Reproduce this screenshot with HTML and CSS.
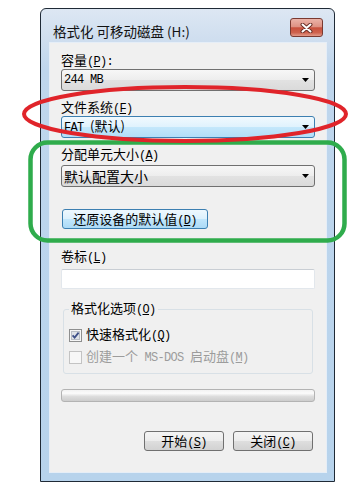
FILE: index.html
```html
<!DOCTYPE html>
<html lang="zh-CN">
<head>
<meta charset="utf-8">
<title>格式化 可移动磁盘 (H:)</title>
<link rel="stylesheet" href="styles.css">
</head>
<body>
<div class="window">
  <div class="titlebar">
    <span class="title">格式化 可移动磁盘 (H:)</span>
    <div class="close">
      <svg width="13" height="10" viewBox="0 0 13 10"><path d="M2.5 1.5L10.5 8.5M10.5 1.5L2.5 8.5" stroke="#6a2e26" stroke-width="4" stroke-linecap="round"/><path d="M2.5 1.5L10.5 8.5M10.5 1.5L2.5 8.5" stroke="#ffffff" stroke-width="2" stroke-linecap="round"/></svg>
    </div>
  </div>
  <div class="panel">
    <div class="field-label">容量<span class="mn">(<u>P</u>):</span></div>
    <div class="combo combo-first"><span class="mn value">244 MB</span><svg class="arrow" width="7" height="4" viewBox="0 0 7 4"><path d="M0 0H7L3.5 4Z" fill="#000"/></svg></div>

    <div class="field-label spaced">文件系统<span class="mn">(<u>F</u>)</span></div>
    <div class="combo combo-hot"><span class="value"><span class="mn">FAT </span>(默认)</span><svg class="arrow" width="7" height="4" viewBox="0 0 7 4"><path d="M0 0H7L3.5 4Z" fill="#000"/></svg></div>

    <div class="field-label spaced">分配单元大小<span class="mn">(<u>A</u>)</span></div>
    <div class="combo combo-alloc"><span class="value big">默认配置大小</span><svg class="arrow" width="7" height="4" viewBox="0 0 7 4"><path d="M0 0H7L3.5 4Z" fill="#000"/></svg></div>

    <button class="reset" type="button">还原设备的默认值<span class="mn">(<u>D</u>)</span></button>

    <div class="field-label label-volume">卷标<span class="mn">(<u>L</u>)</span></div>
    <div class="textbox"></div>

    <fieldset class="options">
      <legend>格式化选项<span class="mn">(<u>O</u>)</span></legend>
      <div class="check check-first">
        <svg class="box" width="13" height="13" viewBox="0 0 13 13"><rect x="0.5" y="0.5" width="12" height="12" fill="#f6f6f6" stroke="#8e8f8f"/><rect x="2.5" y="2.5" width="8" height="8" fill="#dfe3e8" stroke="#b9bec5"/><path d="M3.6 6.4L5.6 8.6L9.6 3.6" fill="none" stroke="#3e5088" stroke-width="1.8"/></svg>
        <span>快速格式化<span class="mn">(<u>Q</u>)</span></span>
      </div>
      <div class="check disabled">
        <svg class="box" width="13" height="13" viewBox="0 0 13 13"><rect x="0.5" y="0.5" width="12" height="12" fill="#f7f7f7" stroke="#c3c3c3"/></svg>
        <span>创建一个<span class="mn"> MS-DOS </span>启动盘<span class="mn">(<u>M</u>)</span></span>
      </div>
    </fieldset>

    <div class="progress"></div>

    <div class="actions">
      <button class="btn" type="button">开始<span class="mn">(<u>S</u>)</span></button>
      <button class="btn" type="button">关闭<span class="mn">(<u>C</u>)</span></button>
    </div>
  </div>
</div>

<svg class="marks" width="358" height="492" viewBox="0 0 358 492">
  <rect x="30.5" y="142.5" width="314" height="98" rx="17" fill="none" stroke="#2fac4c" stroke-width="4.5"/>
  <ellipse cx="185" cy="114" rx="161" ry="27" fill="none" stroke="#e0242a" stroke-width="4"/>
</svg>
</body>
</html>
```

FILE: styles.css
```css
html, body {
  margin: 0;
  padding: 0;
}
body {
  width: 358px;
  height: 492px;
  box-sizing: border-box;
  padding: 8px 0 0 40px;
  background: #ffffff;
  font-family: "Noto Sans CJK SC", "Noto Sans", sans-serif;
  font-size: 13px;
  color: #000;
  overflow: hidden;
}

.mn {
  font-family: "Liberation Mono", "Noto Sans CJK SC", monospace;
  font-size: 12px;
  letter-spacing: -0.7px;
}

.window {
  width: 295px;
  height: 474px;
  box-sizing: border-box;
  border: 1px solid #1f2a36;
  border-radius: 6px 6px 0 0;
  background: linear-gradient(to bottom, #dde7f3 0px, #cfdeef 30px, #bfd6ed 60px, #b7d3ec 100%);
  padding: 0 7px 8px 8px;
  display: flex;
  flex-direction: column;
}

.titlebar {
  height: 33px;
  flex: none;
  display: flex;
  justify-content: space-between;
  align-items: flex-start;
  padding-left: 4px;
}
.title {
  margin-top: 14px;
  line-height: 16px;
  font-size: 13.5px;
  color: #111;
}
.close {
  margin-top: 9px;
  margin-right: 4px;
  width: 33px;
  height: 19px;
  box-sizing: border-box;
  border: 1px solid #7a3a31;
  border-radius: 3px;
  background: linear-gradient(to bottom, #ebb3a8 0%, #de9284 45%, #c8503c 52%, #cf624d 80%, #e29a8a 100%);
  display: flex;
  align-items: center;
  justify-content: center;
}

.panel {
  flex: 1;
  background: #f0f0f0;
  border: 1px solid #e6eef7;
  padding: 9px 11px 0;
  display: flex;
  flex-direction: column;
}

.field-label {
  line-height: 15px;
  height: 15px;
  white-space: nowrap;
}
.field-label.spaced {
  margin-top: 8px;
}

.combo {
  height: 22px;
  flex: none;
  box-sizing: border-box;
  margin-top: 2px;
  border: 1px solid #707070;
  border-radius: 3px;
  background: linear-gradient(to bottom, #f7f7f7 0%, #ededed 50%, #e2e2e2 51%, #dadada 100%);
  display: flex;
  align-items: center;
  justify-content: space-between;
  padding: 0 5px 0 2px;
}
.combo-hot {
  border-color: #3c7fb1;
  background: linear-gradient(to bottom, #f1f9fe 0%, #dff2fd 50%, #c4e7fb 51%, #b2def8 100%);
}
.combo-alloc {
  margin-top: 4px;
}
.value {
  line-height: 18px;
  white-space: nowrap;
}
.value.big {
  font-size: 14px;
}
.arrow {
  flex: none;
  display: block;
}

.reset {
  align-self: flex-start;
  margin: 22px 0 0 1px;
  width: 146px;
  height: 20px;
  padding: 0;
  border: 1px solid #3c7fb1;
  border-radius: 3px;
  background: linear-gradient(to bottom, #eef8fe 0%, #dcf1fd 50%, #c2e6fb 51%, #acdaf6 100%);
  font-family: inherit;
  font-size: 13px;
  line-height: 17px;
  color: #000;
  white-space: nowrap;
}

.label-volume {
  margin-top: 19px;
}
.textbox {
  margin-top: 6px;
  height: 20px;
  flex: none;
  box-sizing: border-box;
  background: #fff;
  border: 1px solid #e2e7ec;
  border-top-color: #c9ced4;
  border-radius: 2px;
}

.options {
  margin: 11px 2px 0;
  padding: 0 6px 7px 5px;
  border: 1px solid #d8e0e6;
  border-radius: 3px;
  min-width: 0;
}
.options legend {
  padding: 0 2px;
  line-height: 15px;
  white-space: nowrap;
}
.check {
  display: flex;
  align-items: center;
  gap: 4px;
  line-height: 15px;
  margin-top: 4px;
  white-space: nowrap;
}
.check-first {
  margin-top: 8px;
}
.box {
  flex: none;
  display: block;
}
.disabled {
  color: #9c9c9c;
}

.progress {
  margin-top: 15px;
  height: 13px;
  flex: none;
  box-sizing: border-box;
  border: 1px solid #b3b3b3;
  border-radius: 3px;
  background: linear-gradient(to bottom, #f2f2f2 0%, #fbfbfb 30%, #dcdcdc 60%, #cdcdcd 100%);
}

.actions {
  margin-top: 29px;
  display: flex;
  justify-content: flex-end;
  gap: 9px;
  padding-right: 2px;
}
.btn {
  width: 80px;
  height: 20px;
  padding: 0;
  border: 1px solid #707070;
  border-radius: 3px;
  background: linear-gradient(to bottom, #f4f4f4 0%, #ececec 50%, #dedede 51%, #d2d2d2 100%);
  font-family: inherit;
  font-size: 13px;
  line-height: 17px;
  color: #000;
}

.marks {
  position: absolute;
  left: 0;
  top: 0;
  pointer-events: none;
}
```
